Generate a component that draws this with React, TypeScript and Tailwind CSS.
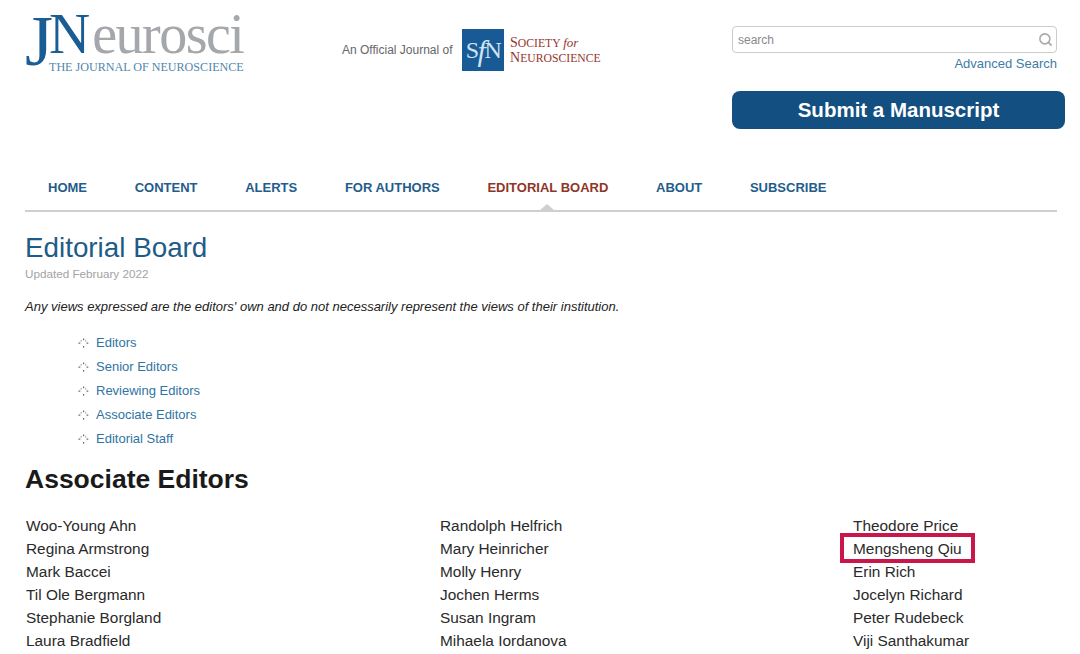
import { Search } from 'lucide-react';

const navItems = ['HOME', 'CONTENT', 'ALERTS', 'FOR AUTHORS', 'EDITORIAL BOARD', 'ABOUT', 'SUBSCRIBE'];
const sections = ['Editors', 'Senior Editors', 'Reviewing Editors', 'Associate Editors', 'Editorial Staff'];
const columns = [
  ['Woo-Young Ahn', 'Regina Armstrong', 'Mark Baccei', 'Til Ole Bergmann', 'Stephanie Borgland', 'Laura Bradfield'],
  ['Randolph Helfrich', 'Mary Heinricher', 'Molly Henry', 'Jochen Herms', 'Susan Ingram', 'Mihaela Iordanova'],
  ['Theodore Price', 'Mengsheng Qiu', 'Erin Rich', 'Jocelyn Richard', 'Peter Rudebeck', 'Viji Santhakumar'],
];

function DotBullet() {
  return (
    <svg width="11" height="11" viewBox="0 0 11 11" className="shrink-0" fill="#5c6670">
      <rect x="5" y="0.5" width="1.2" height="1.6" />
      <rect x="0.5" y="4.5" width="1.8" height="1.2" />
      <rect x="8.5" y="4.5" width="1.8" height="1.2" />
      <rect x="5" y="8" width="1.2" height="1.6" />
      <rect x="2.6" y="2.4" width="1" height="1" />
      <rect x="7.2" y="2.4" width="1" height="1" />
    </svg>
  );
}

export default function App() {
  return (
    <div className="h-[654px] w-[1080px] overflow-hidden bg-white pr-[23px] pl-[25px] font-['Liberation_Sans',Arial,sans-serif]">
      {/* Header */}
      <div className="flex h-[166px] items-start">
        <div className="flex w-[317px] shrink-0 pt-[10px] font-['Liberation_Serif',serif]">
          <span className="mt-[-5px] h-[64px] w-[23px] text-[72px] leading-none text-[#1a5c94]">J</span>
          <div className="flex flex-col">
            <div className="mt-[-5px] flex h-[46px] items-baseline leading-none">
              <span className="ml-[1px] text-[57px] leading-none text-[#1a5c94]">N</span>
              <span className="ml-[2px] text-[56px] leading-none tracking-[-1.5px] text-[#a4a7ab]">eurosci</span>
            </div>
            <div className="mt-[10px] pl-[1px] text-[12.1px] leading-none whitespace-nowrap text-[#4f86ad]">THE JOURNAL OF NEUROSCIENCE</div>
          </div>
        </div>

        <div className="flex w-[390px] shrink-0 items-center pt-[29px]">
          <span className="w-[120px] text-[12px] whitespace-nowrap text-[#666666]">An Official Journal of</span>
          <div className="flex h-[42px] w-[42px] items-center justify-center bg-[#175a96] font-['Liberation_Serif',serif] text-[24px] tracking-[-1.5px] text-[#cfe3f2]">
            S<span className="text-[30px] italic">f</span>N
          </div>
          <div className="mt-[2px] ml-[6px] font-['Liberation_Serif',serif] text-[#96362e]">
            <div className="text-[11.7px] leading-[14px] whitespace-nowrap">
              <span className="text-[14px]">S</span>OCIETY <span className="text-[13px] italic">for</span>
            </div>
            <div className="text-[11.7px] leading-[14px] whitespace-nowrap">
              <span className="text-[14px]">N</span>EUROSCIENCE
            </div>
          </div>
        </div>

        <div className="flex w-[333px] shrink-0 flex-col pt-[26px]">
          <div className="flex h-[27px] w-[325px] items-center justify-between rounded-[4px] border border-[#cccccc] bg-white pr-[3px] pl-[5px]">
            <span className="text-[12px] text-[#8a8a8a]">search</span>
            <Search size={15} strokeWidth={2.5} className="text-[#a9a9a9]" />
          </div>
          <a className="mt-[3px] w-[325px] text-right text-[13px] leading-[16px] text-[#3f7ba6]">Advanced Search</a>
          <div className="mt-[19px] flex h-[38px] items-center justify-center rounded-[8px] bg-[#134f81] text-[20.5px] font-bold text-white">
            Submit a Manuscript
          </div>
        </div>
      </div>

      {/* Nav */}
      <div className="relative flex h-[46px] items-center gap-[47.7px] border-b-[2px] border-[#cfcfcf] pb-[1px] pl-[23px]">
        {navItems.map((item) => (
          <span
            key={item}
            className={`text-[13px] font-bold whitespace-nowrap ${item === 'EDITORIAL BOARD' ? 'text-[#8f3527]' : 'text-[#1f5d8c]'}`}
          >
            {item}
          </span>
        ))}
        <div className="absolute bottom-0 left-[515px] h-0 w-0 border-x-[7px] border-b-[6px] border-x-transparent border-b-[#cfcfcf]" />
      </div>

      {/* Title */}
      <h1 className="mt-[20px] text-[27.8px] leading-[32px] text-[#1e5c88]">Editorial Board</h1>
      <p className="mt-[2px] text-[11.7px] leading-[16px] text-[#a3a3a3]">Updated February 2022</p>
      <p className="mt-[17px] text-[13px] leading-[16px] text-[#222222] italic">
        Any views expressed are the editors' own and do not necessarily represent the views of their institution.
      </p>

      {/* Section links */}
      <ul className="mt-[16px] flex flex-col pl-[53px]">
        {sections.map((s) => (
          <li key={s} className="flex h-[24px] items-center gap-[7px]">
            <DotBullet />
            <a className="text-[13px] text-[#2f74a3]">{s}</a>
          </li>
        ))}
      </ul>

      <h2 className="mt-[13px] text-[26.5px] leading-[30px] font-bold text-[#1a1a1a]">Associate Editors</h2>

      {/* Names */}
      <div className="mt-[20px] grid grid-cols-[414px_413px_1fr] pl-[1px]">
        {columns.map((col, i) => (
          <div key={i} className="flex flex-col">
            {col.map((name) => (
              <div key={name} className="relative h-[23px] text-[15.4px] leading-[23px] whitespace-nowrap text-[#2a2a2a]">
                {name}
                {name === 'Mengsheng Qiu' && (
                  <div className="absolute top-[-4px] left-[-13px] h-[30px] w-[135px] border-[4px] border-[#c9174c]" />
                )}
              </div>
            ))}
          </div>
        ))}
      </div>
    </div>
  );
}
